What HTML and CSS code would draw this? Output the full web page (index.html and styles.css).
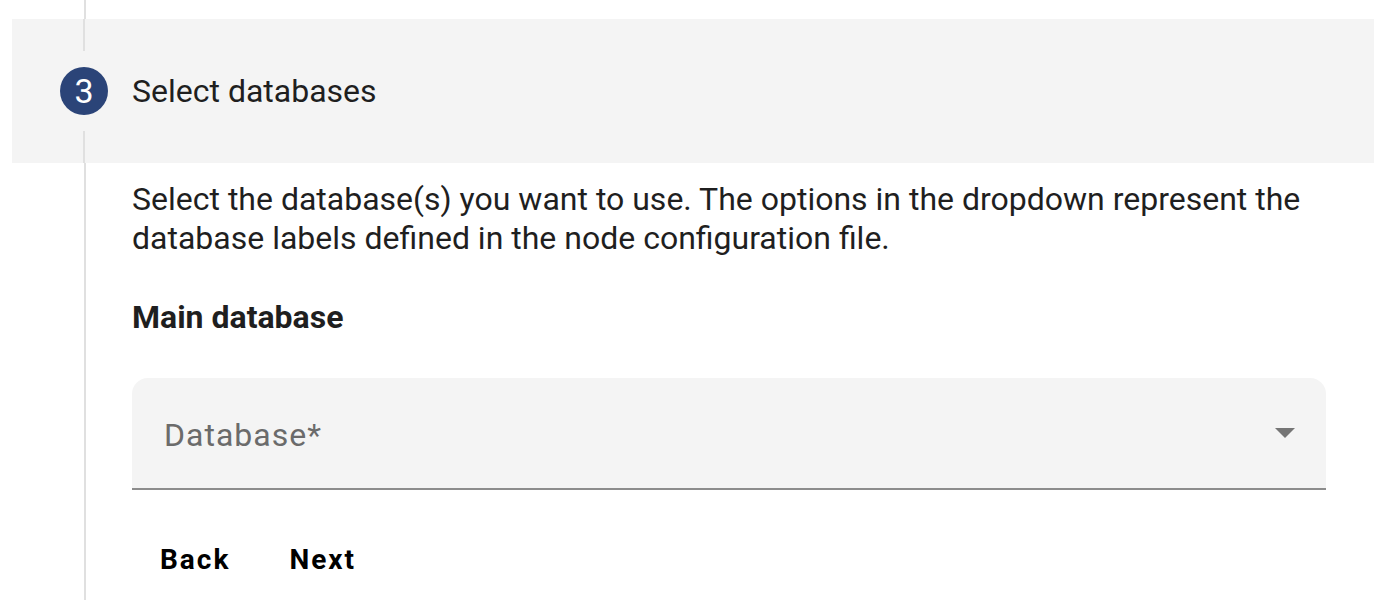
FILE: index.html
```html
<!DOCTYPE html>
<html lang="en">
<head>
<meta charset="utf-8">
<title>Select databases</title>
<link rel="stylesheet" href="styles.css">
</head>
<body>
<div class="stepper">
  <div class="connector-top"></div>
  <div class="step-header">
    <div class="icon-col">
      <div class="line"></div>
      <div class="step-icon">3</div>
      <div class="line"></div>
    </div>
    <div class="step-label">Select databases</div>
  </div>
  <div class="step-content">
    <p class="desc">Select the database(s) you want to use. The options in the dropdown represent the database labels defined in the node configuration file.</p>
    <h3 class="field-title">Main database</h3>
    <div class="select">
      <span class="placeholder">Database*</span>
      <svg class="arrow" width="20" height="10" viewBox="0 0 20 10"><path d="M0 0 L20 0 L10 10 Z" fill="#757575"/></svg>
    </div>
    <div class="actions">
      <button class="btn">Back</button>
      <button class="btn">Next</button>
    </div>
  </div>
</div>
</body>
</html>
```

FILE: styles.css
```css
html, body {
  margin: 0;
  padding: 0;
  background: #ffffff;
}
body {
  font-family: Roboto, "Liberation Sans", sans-serif;
  color: rgba(0, 0, 0, 0.87);
  overflow: hidden;
}
.stepper {
  margin-left: 12px;
  width: 1362px;
}
.connector-top {
  margin-left: 72px;
  width: 2px;
  height: 19px;
  background: #e0e0e0;
}
.step-header {
  height: 144px;
  background: #f4f4f4;
  display: flex;
  align-items: stretch;
  padding-left: 48px;
}
.icon-col {
  width: 48px;
  display: flex;
  flex-direction: column;
  align-items: center;
}
.icon-col .line {
  flex: 1;
  width: 2px;
  background: #e0e0e0;
}
.step-icon {
  width: 48px;
  height: 48px;
  border-radius: 50%;
  background: #2b4478;
  color: #ffffff;
  font-size: 34px;
  line-height: 48px;
  text-align: center;
  margin: 16px 0;
}
.step-label {
  align-self: center;
  margin-left: 24px;
  font-size: 32px;
  color: #1f1f1f;
}
.step-content {
  margin-left: 72px;
  border-left: 2px solid #e0e0e0;
  padding-left: 46px;
  padding-right: 48px;
  padding-top: 17px;
  height: 437px;
}
.desc {
  margin: 0;
  font-size: 32px;
  line-height: 39px;
  color: #1f1f1f;
}
.field-title {
  margin: 39px 0 0;
  font-size: 32px;
  line-height: 40px;
  font-weight: 700;
  color: #1f1f1f;
}
.select {
  margin-top: 41px;
  height: 110px;
  background: #f4f4f4;
  border-radius: 16px 16px 0 0;
  border-bottom: 2px solid #8c8c8c;
  display: flex;
  align-items: center;
  padding: 0 32px;
}
.placeholder {
  flex: 1;
  padding-top: 3px;
  font-size: 32px;
  letter-spacing: 1px;
  color: #6b6b6b;
}
.arrow {
  margin-right: -1px;
}
.actions {
  margin-top: 49px;
  display: flex;
  gap: 3px;
}
.btn {
  font-family: Roboto, "Liberation Sans", sans-serif;
  background: none;
  border: none;
  padding: 0 28px;
  height: 40px;
  font-size: 28px;
  font-weight: 700;
  letter-spacing: 2px;
  color: #000000;
}
```
